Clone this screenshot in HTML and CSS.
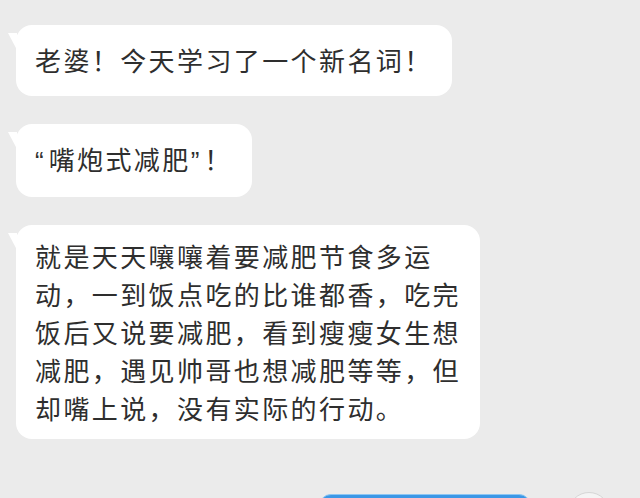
FILE: index.html
```html
<!DOCTYPE html>
<html lang="zh-CN">
<head>
    <meta charset="UTF-8">
    <meta name="viewport" content="width=device-width, initial-scale=1.0">
    <title>聊天记录</title>
    <link rel="stylesheet" href="styles.css">
</head>
<body>
    <div class="chat">
        <div class="row">
            <div class="bubble single">老婆！今天学习了一个新名词！</div>
        </div>
        <div class="row">
            <div class="bubble single"><span class="q">“</span>嘴炮式减肥<span class="q">”</span>！</div>
        </div>
        <div class="row">
            <div class="bubble">就是天天嚷嚷着要减肥节食多运<br>动，一到饭点吃的比谁都香，吃完<br>饭后又说要减肥，看到瘦瘦女生想<br>减肥，遇见帅哥也想减肥等等，但<br>却嘴上说，没有实际的行动。</div>
        </div>
        <div class="row mine">
            <div class="bubble blue"></div>
            <div class="avatar"></div>
        </div>
    </div>
</body>
</html>
```

FILE: styles.css
```css
html, body {
    height: 100%;
    overflow: hidden;
}
body {
    margin: 0;
    background-color: #ebebeb;
    font-family: "Noto Sans CJK SC", "Noto Sans", sans-serif;
    color: #2e2e2e;
}
.chat {
    display: flex;
    flex-direction: column;
    gap: 28px;
    padding: 25px 30px 0 16px;
}
.row {
    display: flex;
}
.row.mine {
    justify-content: flex-end;
    gap: 37px;
    margin-top: 27px;
}
.bubble {
    position: relative;
    background-color: #fff;
    border-radius: 16px;
    padding: 12px 19px;
    font-size: 26px;
    letter-spacing: 2.4px;
    line-height: 38px;
    white-space: nowrap;
}
.bubble.single {
    padding-top: 16px;
    padding-bottom: 17px;
}
.bubble::before {
    content: "";
    position: absolute;
    left: -8px;
    top: 8px;
    width: 9px;
    height: 17px;
    background-color: #fff;
    clip-path: polygon(0 0, 100% 0, 100% 100%);
}
.q {
    font-family: "Liberation Sans", sans-serif;
    letter-spacing: 5px;
}
.bubble.blue {
    width: 210px;
    height: 70px;
    padding: 0;
    background-color: #3b97e6;
    border: 1px solid #8cc6f3;
    border-radius: 12px;
}
.bubble.blue::before {
    display: none;
}
.avatar {
    width: 40px;
    height: 40px;
    border-radius: 50%;
    background-color: #f4f4f4;
    border: 1px solid #d6d6d6;
    margin-top: -2px;
}
```
